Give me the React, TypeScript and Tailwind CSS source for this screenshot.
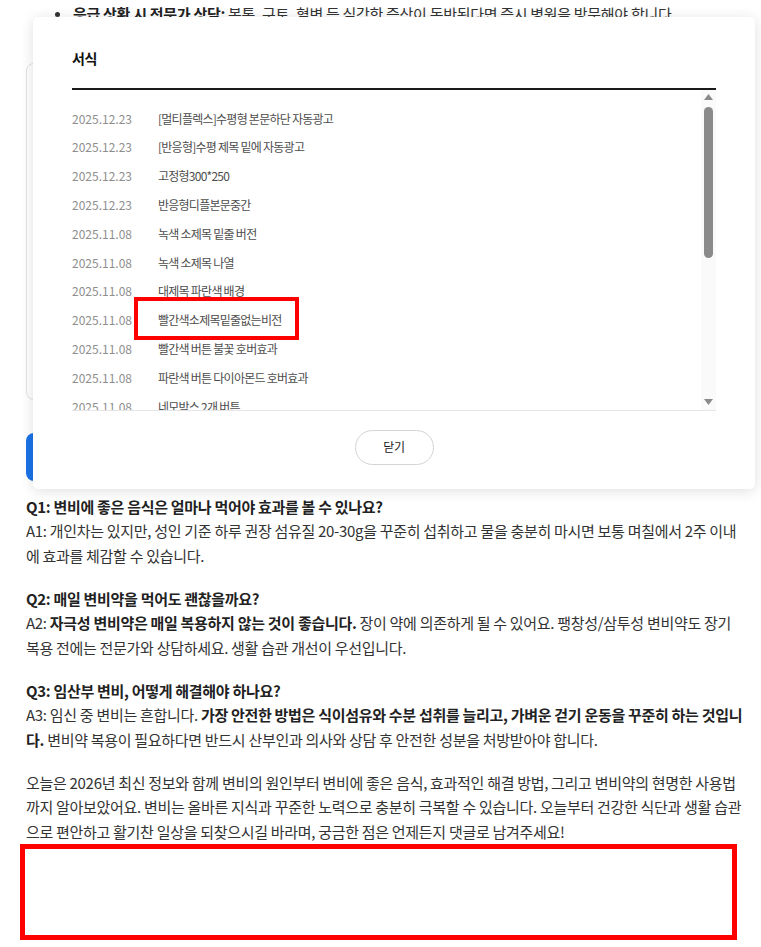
const rows = [
  { date: "2025.12.23", title: "[멀티플렉스]수평형 본문하단 자동광고" },
  { date: "2025.12.23", title: "[반응형]수평 제목 밑에 자동광고" },
  { date: "2025.12.23", title: "고정형300*250" },
  { date: "2025.12.23", title: "반응형디플본문중간" },
  { date: "2025.11.08", title: "녹색 소제목 밑줄 버전" },
  { date: "2025.11.08", title: "녹색 소제목 나열" },
  { date: "2025.11.08", title: "대제목 파란색 배경" },
  { date: "2025.11.08", title: "빨간색소제목밑줄없는비전" },
  { date: "2025.11.08", title: "빨간색 버튼 불꽃 호버효과" },
  { date: "2025.11.08", title: "파란색 버튼 다이아몬드 호버효과" },
  { date: "2025.11.08", title: "네모박스 2개 버튼" },
];

function TemplateModal() {
  return (
    <div className="absolute left-[33px] top-[17px] w-[722px] h-[472px] bg-white rounded-[5px] shadow-[0_2px_14px_rgba(0,0,0,0.13)] px-[39px] pt-[31px]">
      <h3 className="text-[14px] leading-[20px] font-bold text-[#111]">서식</h3>
      <div className="mt-[20px] h-[2px] bg-[#1a1a1a]" />
      <div className="flex h-[321px] overflow-hidden border-b border-[#e6e6e6]">
        <ul className="flex-1 pt-[14.4px]">
          {rows.map((r, i) => (
            <li key={i} className="flex items-center h-[28.8px] text-[12px] tracking-[-0.75px]">
              <span className="w-[86px] shrink-0 text-[#8e8e8e] tracking-normal">{r.date}</span>
              <span className="text-[#4d4d4d]">{r.title}</span>
            </li>
          ))}
        </ul>
        {/* fake scrollbar */}
        <div className="w-[15px] bg-[#fafafa] flex flex-col items-center">
          <svg width="9" height="6" viewBox="0 0 9 6" className="mt-[4px]">
            <path d="M4.5 0L9 6H0z" fill="#8a8a8a" />
          </svg>
          <div className="mt-[7px] w-[9px] h-[151px] rounded-full bg-[#8a8a8a]" />
          <div className="flex-1" />
          <svg width="9" height="6" viewBox="0 0 9 6" className="mb-[5px]">
            <path d="M0 0H9L4.5 6z" fill="#8a8a8a" />
          </svg>
        </div>
      </div>
      <div className="flex justify-center mt-[19px]">
        <button className="w-[79px] h-[35px] rounded-full border border-[#d4d4d4] bg-white text-[12px] text-[#222]">
          닫기
        </button>
      </div>
      <div className="absolute left-[101px] top-[280px] w-[165px] h-[43px] border-[4px] border-[#ff0000]" />
    </div>
  );
}

export default function App() {
  return (
    <div className="relative w-[761px] h-[947px] overflow-hidden bg-white font-['Noto_Sans_CJK_KR',sans-serif] text-[15px] leading-[24.5px] text-[#333] tracking-[-0.3px]">
      <div className="pl-[26px] pr-[14px] pt-[2px]">
        <ul>
          <li className="flex items-start">
            <span className="mt-[10px] ml-[29px] mr-[13px] w-[5px] h-[5px] rounded-full bg-[#333] shrink-0" />
            <span>
              <b className="text-[#222]">응급 상황 시 전문가 상담:</b> 복통, 구토, 혈변 등 심각한 증상이 동반된다면 즉시 병원을 방문해야 합니다.
            </span>
          </li>
        </ul>

        <div className="mt-[36px] h-[337px] rounded-lg border border-[#e2e2e2]" />
        <div className="mt-[33px] h-[48px] rounded-lg bg-[#1b73e8]" />

        <div className="mt-[14px]">
          <p className="font-bold text-[#222]">Q1: 변비에 좋은 음식은 얼마나 먹어야 효과를 볼 수 있나요?</p>
          <p>A1: 개인차는 있지만, 성인 기준 하루 권장 섬유질 20-30g을 꾸준히 섭취하고 물을 충분히 마시면 보통 며칠에서 2주 이내에 효과를 체감할 수 있습니다.</p>
        </div>

        <div className="mt-[18.5px]">
          <p className="font-bold text-[#222]">Q2: 매일 변비약을 먹어도 괜찮을까요?</p>
          <p>
            A2: <b className="text-[#222]">자극성 변비약은 매일 복용하지 않는 것이 좋습니다.</b> 장이 약에 의존하게 될 수 있어요. 팽창성/삼투성 변비약도 장기 복용 전에는 전문가와 상담하세요. 생활 습관 개선이 우선입니다.
          </p>
        </div>

        <div className="mt-[18.5px]">
          <p className="font-bold text-[#222]">Q3: 임산부 변비, 어떻게 해결해야 하나요?</p>
          <p>
            A3: 임신 중 변비는 흔합니다. <b className="text-[#222]">가장 안전한 방법은 식이섬유와 수분 섭취를 늘리고, 가벼운 걷기 운동을 꾸준히 하는 것입니다.</b> 변비약 복용이 필요하다면 반드시 산부인과 의사와 상담 후 안전한 성분을 처방받아야 합니다.
          </p>
        </div>

        <p className="mt-[18.5px]">
          오늘은 2026년 최신 정보와 함께 변비의 원인부터 변비에 좋은 음식, 효과적인 해결 방법, 그리고 변비약의 현명한 사용법까지 알아보았어요. 변비는 올바른 지식과 꾸준한 노력으로 충분히 극복할 수 있습니다. 오늘부터 건강한 식단과 생활 습관으로 편안하고 활기찬 일상을 되찾으시길 바라며, 궁금한 점은 언제든지 댓글로 남겨주세요!
        </p>

        <div className="-ml-[6px] w-[717px] h-[96px] border-[5px] border-[#ff0000]" />
      </div>

      <TemplateModal />
    </div>
  );
}
